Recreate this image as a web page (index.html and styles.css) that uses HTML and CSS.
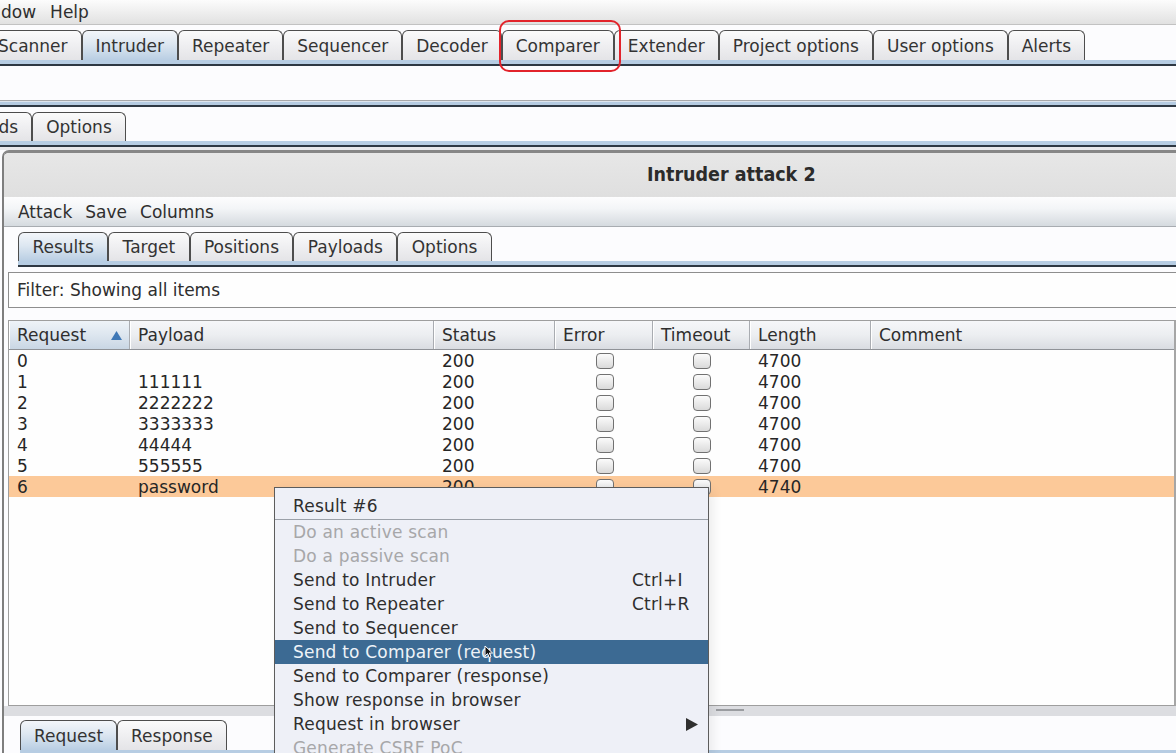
FILE: index.html
```html
<!DOCTYPE html>
<html>
<head>
<meta charset="utf-8">
<title>Burp Intruder</title>
<link rel="stylesheet" href="styles.css">
</head>
<body>
<div class="app">
  <div class="menubar"><span>dow</span><span>Help</span></div>

  <div class="tabstrip main">
    <div class="tabs first-cut">
      <div class="tab">Scanner</div>
      <div class="tab sel">Intruder</div>
      <div class="tab">Repeater</div>
      <div class="tab">Sequencer</div>
      <div class="tab">Decoder</div>
      <div class="tab">Comparer</div>
      <div class="tab">Extender</div>
      <div class="tab">Project options</div>
      <div class="tab">User options</div>
      <div class="tab">Alerts</div>
    </div>
    <div class="band"></div>
  </div>

  <div class="blank"></div>
  <div class="band2"></div>

  <div class="tabstrip sub">
    <div class="tabs sub-cut">
      <div class="tab short">Payloads</div>
      <div class="tab short">Options</div>
    </div>
    <div class="band"></div>
  </div>

  <div class="gap"></div>

  <div class="window">
    <div class="titlebar">Intruder attack 2</div>
    <div class="wmenu"><span>Attack</span><span>Save</span><span>Columns</span></div>
    <div class="tabstrip wtabs">
      <div class="tabs">
        <div class="tab short sel">Results</div>
        <div class="tab short">Target</div>
        <div class="tab short">Positions</div>
        <div class="tab short">Payloads</div>
        <div class="tab short">Options</div>
      </div>
      <div class="band"></div>
    </div>

    <div class="filter">Filter: Showing all items</div>

    <div class="table">
      <div class="thead">
        <div class="th sorted">Request<svg class="sort" width="11" height="9" viewBox="0 0 11 9"><polygon points="5.5,0 11,9 0,9" fill="#3f78b6"/></svg></div>
        <div class="th">Payload</div>
        <div class="th">Status</div>
        <div class="th">Error</div>
        <div class="th">Timeout</div>
        <div class="th">Length</div>
        <div class="th last">Comment</div>
      </div>
      <div class="tbody">
        <div class="tr"><div class="td">0</div><div class="td"></div><div class="td">200</div><div class="td c"><span class="cb"></span></div><div class="td c"><span class="cb"></span></div><div class="td">4700</div><div class="td"></div></div>
        <div class="tr"><div class="td">1</div><div class="td">111111</div><div class="td">200</div><div class="td c"><span class="cb"></span></div><div class="td c"><span class="cb"></span></div><div class="td">4700</div><div class="td"></div></div>
        <div class="tr"><div class="td">2</div><div class="td">2222222</div><div class="td">200</div><div class="td c"><span class="cb"></span></div><div class="td c"><span class="cb"></span></div><div class="td">4700</div><div class="td"></div></div>
        <div class="tr"><div class="td">3</div><div class="td">3333333</div><div class="td">200</div><div class="td c"><span class="cb"></span></div><div class="td c"><span class="cb"></span></div><div class="td">4700</div><div class="td"></div></div>
        <div class="tr"><div class="td">4</div><div class="td">44444</div><div class="td">200</div><div class="td c"><span class="cb"></span></div><div class="td c"><span class="cb"></span></div><div class="td">4700</div><div class="td"></div></div>
        <div class="tr"><div class="td">5</div><div class="td">555555</div><div class="td">200</div><div class="td c"><span class="cb"></span></div><div class="td c"><span class="cb"></span></div><div class="td">4700</div><div class="td"></div></div>
        <div class="tr hl"><div class="td">6</div><div class="td">password</div><div class="td">200</div><div class="td c"><span class="cb"></span></div><div class="td c"><span class="cb"></span></div><div class="td">4740</div><div class="td"></div></div>
      </div>
    </div>

    <div class="splitter"><span class="grip"></span></div>

    <div class="tabstrip btabs">
      <div class="tabs">
        <div class="tab sel">Request</div>
        <div class="tab">Response</div>
      </div>
      <div class="band"></div>
    </div>
  </div>
</div>

<div class="annot"></div>

<div class="ctx">
  <div class="head">Result #6</div>
  <div class="item dis">Do an active scan</div>
  <div class="item dis">Do a passive scan</div>
  <div class="item">Send to Intruder<span class="sc">Ctrl+I</span></div>
  <div class="item">Send to Repeater<span class="sc">Ctrl+R</span></div>
  <div class="item">Send to Sequencer</div>
  <div class="item hl">Send to Comparer (request)</div>
  <div class="item">Send to Comparer (response)</div>
  <div class="item">Show response in browser</div>
  <div class="item">Request in browser<svg class="subarrow" width="12" height="13" viewBox="0 0 12 13"><polygon points="0,0 12,6.5 0,13" fill="#2f2f2f"/></svg></div>
  <div class="item dis">Generate CSRF PoC</div>
</div>

<svg class="cursor" width="10" height="14" viewBox="0 0 10 14"><path d="M1 1 L1 11 L3.5 8.6 L5.3 12.6 L7 11.8 L5.3 8 L8.6 8 Z" fill="#111" stroke="#fff" stroke-width="1"/></svg>
</body>
</html>
```

FILE: styles.css
```css
* { box-sizing: border-box; }
html, body { margin: 0; padding: 0; }
body {
  width: 1176px;
  height: 753px;
  overflow: hidden;
  position: relative;
  background: #fcfcfe;
  font-family: "DejaVu Sans", "Liberation Sans", sans-serif;
  font-size: 17px;
  color: #2e2e2e;
}
.app { display: flex; flex-direction: column; height: 753px; overflow: hidden; }

/* top menu */
.menubar {
  height: 25px;
  flex: none;
  display: flex;
  align-items: center;
  gap: 14px;
  padding-left: 1px;
  background: linear-gradient(#fcfcfc, #e1e1e1);
  border-bottom: 1px solid #c2c2c2;
  white-space: nowrap;
}

/* tabs */
.tabstrip { flex: none; display: flex; flex-direction: column; background: #fcfcfe; }
.tabs { display: flex; height: 30px; }
.tab {
  flex: none;
  height: 100%;
  display: flex;
  align-items: center;
  padding: 0 13px;
  border: 1px solid #4d4d4d;
  border-bottom: none;
  border-radius: 6px 6px 0 0;
  background: linear-gradient(#fbfbfb, #f1f1f3 40%, #e4e4e7);
  white-space: nowrap;
  color: #333;
}
.tab.sel { background: linear-gradient(#f3f6fa, #dde7f1 45%, #b9cee3); }
.band { height: 6px; background: linear-gradient(#b7cde3 0 4px, #2e3843 4px 6px); }

.main { padding-top: 5px; }
.first-cut { margin-left: -16px; }

.blank { flex: none; height: 34px; background: #fcfcfe; }
.band2 {
  flex: none;
  height: 7px;
  background: linear-gradient(#a9a9ab 0 1px, #dfe6ee 1px 2px, #b6cce2 2px 5px, #2f3944 5px 7px);
}

.sub { padding-top: 5px; }
.sub .tabs, .wtabs .tabs { height: 29px; }
.sub-cut { margin-left: -71px; }

.gap { flex: none; height: 3px; background: #e8e8eb; }

/* attack window */
.window {
  flex: none;
  height: 603px;
  margin-left: 2px;
  border-top: 3px solid #878787;
  border-left: 2px solid #7e7e7e;
  border-top-left-radius: 7px;
  background: #fcfcfe;
  display: flex;
  flex-direction: column;
  overflow: hidden;
}
.titlebar {
  flex: none;
  height: 44px;
  line-height: 44px;
  padding-left: 643px;
  background: linear-gradient(#e7e7e7, #dfdfdf);
  font-family: "DejaVu Sans Condensed", "DejaVu Sans", sans-serif;
  font-stretch: condensed;
  font-weight: bold;
  font-size: 19.5px;
  color: #2b2b2b;
  white-space: nowrap;
}
.wmenu {
  flex: none;
  height: 30px;
  display: flex;
  align-items: center;
  gap: 13px;
  padding-left: 14px;
  background: linear-gradient(#fdfdfe, #f3f5f7 40%, #d5dadf);
  border-bottom: 1px solid #a8acb1;
}
.wtabs { padding-top: 5px; padding-left: 14px; }
.wtabs .tab { padding: 0 13.4px; }

.filter {
  flex: none;
  margin-top: 5px;
  margin-left: 4px;
  height: 36px;
  border: 1px solid #8e8e8e;
  border-right: none;
  background: #fefefe;
  display: flex;
  align-items: center;
  padding-left: 8px;
}

/* table */
.table {
  flex: none;
  margin-top: 12px;
  margin-left: 4px;
  height: 386px;
  border: 1px solid #9e9e9e;
  border-right: 2px solid #a6a6a6;
  background: #fefefe;
  display: flex;
  flex-direction: column;
}
.thead, .tr {
  display: grid;
  grid-template-columns: 121px 304px 121px 98px 97px 121px 1fr;
}
.thead {
  height: 29px;
  border-bottom: 1px solid #8f9297;
  background: linear-gradient(#f6f7f9, #eceef1 50%, #d9dce1);
}
.th {
  display: flex;
  align-items: center;
  padding-left: 8px;
  border-right: 1px solid #a9acb1;
  box-shadow: inset 1px 0 0 #ffffff;
  white-space: nowrap;
}
.th.last { border-right: none; }
.th.sorted { background: linear-gradient(#eef3f8, #dde6ef 50%, #c9d6e4); }
.sort { flex: none; margin-left: auto; margin-right: 7px; width: 11px; height: 9px; }
.tr { height: 21px; }
.td {
  display: flex;
  align-items: center;
  padding-left: 8px;
  white-space: nowrap;
  color: #262626;
}
.td.c { justify-content: center; padding-left: 1px; padding-top: 1px; }
.tr.hl { background: #fcc999; }
.cb {
  flex: none;
  display: block;
  width: 18px;
  height: 16px;
  border: 1.5px solid #717171;
  border-radius: 4px;
  background: linear-gradient(#fbfbfb, #dadada);
}

.splitter {
  flex: none;
  height: 10px;
  background: #dcdde1;
  display: flex;
  align-items: flex-start;
}
.grip {
  margin-left: 712px;
  margin-top: 3px;
  width: 28px;
  height: 2px;
  background: #9a9ca0;
}
.btabs { padding-top: 4px; padding-left: 16px; }

/* annotation */
.annot {
  position: absolute;
  left: 499px;
  top: 20px;
  width: 122px;
  height: 52px;
  border: 2px solid #e2232b;
  border-radius: 10px;
}

/* context menu */
.ctx {
  position: absolute;
  left: 274px;
  top: 487px;
  width: 435px;
  height: 290px;
  background: #eef0f7;
  border: 1px solid #5c5c5c;
  box-shadow: 4px 2px 10px rgba(0, 0, 0, 0.07);
  letter-spacing: 0.2px;
}
.ctx .head {
  height: 32px;
  padding: 6px 0 0 18px;
  line-height: 24px;
  border-bottom: 1px solid #9aa0a8;
  color: #2e2e2e;
}
.ctx .item {
  height: 24px;
  display: flex;
  align-items: center;
  padding-left: 18px;
  white-space: nowrap;
  color: #2e2e2e;
}
.ctx .item .sc { flex: none; margin-left: auto; width: 76px; }
.ctx .item .subarrow { flex: none; width: 12px; height: 13px; margin-left: auto; margin-right: 10px; }
.ctx .item.dis { color: #a7a7a9; }
.ctx .item.hl { background: #3c6a93; color: #eef3f8; }

.cursor {
  position: absolute;
  left: 484px;
  top: 645px;
}
```
